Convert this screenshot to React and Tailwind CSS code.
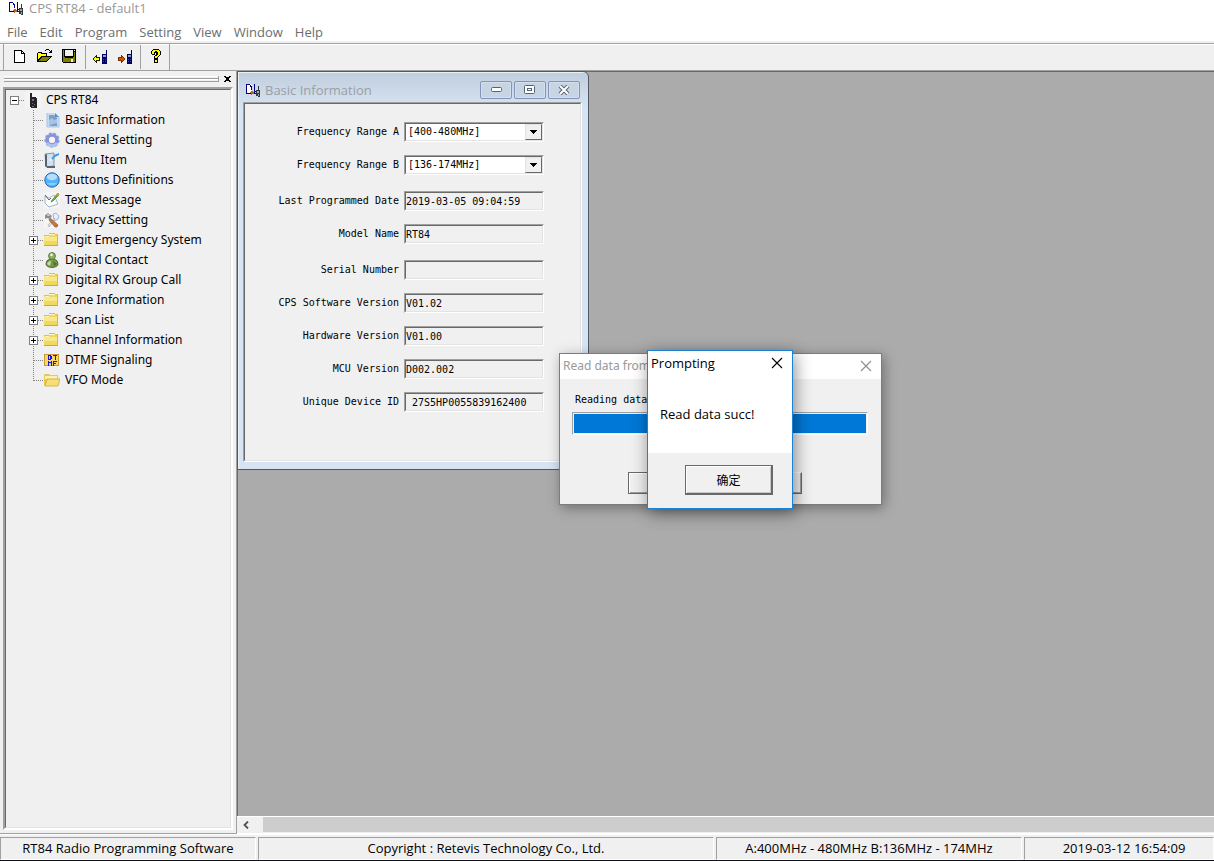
import React from 'react';

const MENUS = ['File', 'Edit', 'Program', 'Setting', 'View', 'Window', 'Help'];

const TREE = [
  { label: 'Basic Information', icon: 'page' },
  { label: 'General Setting', icon: 'gear' },
  { label: 'Menu Item', icon: 'note' },
  { label: 'Buttons Definitions', icon: 'ball' },
  { label: 'Text Message', icon: 'pencil' },
  { label: 'Privacy Setting', icon: 'tools' },
  { label: 'Digit Emergency System', icon: 'folder', expandable: true },
  { label: 'Digital Contact', icon: 'person' },
  { label: 'Digital RX Group Call', icon: 'folder', expandable: true },
  { label: 'Zone Information', icon: 'folder', expandable: true },
  { label: 'Scan List', icon: 'folder', expandable: true },
  { label: 'Channel Information', icon: 'folder', expandable: true },
  { label: 'DTMF Signaling', icon: 'dtmf' },
  { label: 'VFO Mode', icon: 'folderOpen' },
];

// Form rows, grouped by spacing
const FIELDS = [
  [
    { id: 'rangeA', label: 'Frequency Range A', value: '[400-480MHz]', select: true },
    { id: 'rangeB', label: 'Frequency Range B', value: '[136-174MHz]', select: true },
  ],
  [
    { id: 'lastDate', label: 'Last Programmed Date', value: '2019-03-05 09:04:59' },
    { id: 'model', label: 'Model Name', value: 'RT84' },
  ],
  [
    { id: 'serial', label: 'Serial Number', value: '' },
    { id: 'cps', label: 'CPS Software Version', value: 'V01.02' },
    { id: 'hardware', label: 'Hardware Version', value: 'V01.00' },
    { id: 'mcu', label: 'MCU Version', value: 'D002.002' },
    { id: 'device', label: 'Unique Device ID', value: ' 27S5HP0055839162400' },
  ],
];

const sunken = 'border border-t-[#a0a0a0] border-l-[#a0a0a0] border-r-white border-b-white';
const sunkenInner = 'border border-t-[#696969] border-l-[#696969] border-r-[#e3e3e3] border-b-[#e3e3e3]';

function AppLogo() {
  return (
    <svg width="16" height="16" viewBox="0 0 16 16" shapeRendering="crispEdges" aria-hidden="true">
      <path d="M1 2h4l2 2v7H1z" fill="#fff" />
      <path d="M1 2h1v9H1zM1 11h7v1H1zM2 2h3v1H2zM5 3h1v2H5zM6 4h1v4H6z" fill="#000080" />
      <path d="M6 9h2v1h1v2H7v1H6v-2H5v-1h1z" fill="#c0601c" />
      <path d="M9 2h1v9H9zM10 9h2v1h-2zM9 11h2v1H9z" fill="#000080" />
      <path d="M13 4h1v4h-1z" fill="#303840" />
      <path d="M11 8h4v7h-2v-1h-2z" fill="#303840" />
      <path d="M12 9h2v2h-2zM13 12h1v2h-1z" fill="#a0a0a8" />
    </svg>
  );
}

function NewIcon() {
  return (
    <svg width="16" height="16" viewBox="0 0 16 16" shapeRendering="crispEdges">
      <path d="M3 1h8v1h1v1h1v1h1v10H3z" fill="#000" />
      <path d="M4 2h6v3h3v8H4zM11 3h1v1h-1z" fill="#fff" />
    </svg>
  );
}

function OpenIcon() {
  return (
    <svg width="16" height="16" viewBox="0 0 16 16" shapeRendering="crispEdges">
      <path d="M1 4h1V3h4v1h5v3h5v1h-1v1h-1v1h-1v1h-1v1h-1v1H1z" fill="#000" />
      <path d="M2 4h3v1h5v2H5v1H4v1H3v1H2z" fill="#ff0" />
      <path d="M3 5h1v1H3zM5 5h1v1H5zM7 5h1v1H7zM9 5h1v1H9zM2 6h1v1H2zM4 6h1v1H4zM6 6h1v1H6zM8 6h1v1H8zM3 7h1v1H3z" fill="#fff" />
      <path d="M6 8h8v1h-1v1h-1v1h-1v1H3v-1h1v-1h1V9h1z" fill="#808000" />
      <path d="M10 0h3v1h-3zM9 1h1v1H9zM13 1h1v1h-1zM15 1h1v3h-3V3h1V2h1z" fill="#000" />
    </svg>
  );
}

function SaveIcon() {
  return (
    <svg width="16" height="16" viewBox="0 0 16 16" shapeRendering="crispEdges">
      <path d="M1 0h14v14H2v-1H1z" fill="#000" />
      <path d="M2 1h1v7h1v1h8V8h1V3h1v10H2z" fill="#808000" />
      <path d="M4 1h8v6H4zM13 1h1v1h-1zM10 10h2v3h-2z" fill="#f0f0f0" />
    </svg>
  );
}

function RadioArrowIcon({ direction }) {
  return (
    <svg width="16" height="16" viewBox="0 0 16 16" shapeRendering="crispEdges">
      {direction === 'read' ? (
        <g>
          <path d="M0 9h1V8h1V7h1V6h1v2h3v4H4v2H3v-1H2v-1H1v-1H0z" fill="#202000" />
          <path d="M1 9h1V8h1v1h3v2H3v1H2v-1H1z" fill="#ff0" />
        </g>
      ) : (
        <g>
          <path d="M0 8h3V6h1v1h1v1h1v1h1v2H6v1H5v1H4v1H3v-2H0z" fill="#803000" />
          <path d="M1 9h3V8h1v1h1v2H5v1H4v-1H1z" fill="#c85a00" />
        </g>
      )}
      <path d="M13 1h1v4h-1zM9 5h5v10H9z" fill="#000060" />
      <path d="M10 6h3v2h-3z" fill="#80a0e0" />
      <path d="M10 10h1v1h-1zM12 10h1v1h-1zM10 12h1v1h-1zM12 12h1v1h-1z" fill="#2040d0" />
    </svg>
  );
}

function HelpIcon() {
  return (
    <svg width="16" height="16" viewBox="0 0 16 16" shapeRendering="crispEdges">
      <path d="M5 0h6v1h1v1h1v4h-1v1h-1v1h-1v2H6V7h1V6h1V4H7v2H4V5H3V2h1V1h1zM6 10h4v4H6z" fill="#000" />
      <path d="M5 1h6v1h1v4h-1v1h-1v1H9v1H7V7h2V6h1V3H9V2H7v1H6v2H4V2h1zM7 11h2v2H7z" fill="#ff0" />
    </svg>
  );
}

function TreeIcon({ name }) {
  const common = { width: 16, height: 16, viewBox: '0 0 16 16', className: 'shrink-0' };
  switch (name) {
    case 'radio':
      return (
        <svg {...common} shapeRendering="crispEdges">
          <path d="M0 0h16v16H0z" fill="#f4f4f4" />
          <path d="M5 1h2v4h4v1h1v10H6v-1H5z" fill="#26222a" />
          <path d="M7 7h2v2H7zM7 11h1v1H7zM9 12h1v1H9zM7 14h2v1H7z" fill="#7a707c" />
        </svg>
      );
    case 'page':
      return (
        <svg {...common}>
          <path d="M3 1h8l4 4v10H3z" fill="#c3dbf3" />
          <path d="M5 3h5l3 3v8H5z" fill="#7d9dcb" />
          <path d="M5 8l3-2 2 2 3-1v4l-4 1-4 2z" fill="#a9c3e3" />
          <path d="M11 1l4 4h-4z" fill="#4f8fdc" />
          <path d="M3 1v14h12V5" fill="none" stroke="#a5c5e8" />
        </svg>
      );
    case 'gear':
      return (
        <svg {...common}>
          <circle cx="8" cy="8" r="6.6" fill="none" stroke="#8f9ee0" strokeWidth="2" strokeDasharray="3 1.6" />
          <circle cx="8" cy="8" r="4.8" fill="none" stroke="#8794dd" strokeWidth="3.4" />
          <path d="M3 11a6 6 0 0 0 10 0" fill="none" stroke="#a9c4ee" strokeWidth="3" />
          <circle cx="8" cy="7.6" r="2.8" fill="#f4f4fb" />
        </svg>
      );
    case 'note':
      return (
        <svg {...common}>
          <path d="M1 2l9-1v13l-8 1z" fill="#cfe0f2" stroke="#8295a8" />
          <path d="M1 3l2-1v13l-2-1z" fill="#55626f" />
          <path d="M3 14h8v2H3z" fill="#59636d" />
          <path d="M7 7l3-4 5-2v2l-4 2-3 3z" fill="#3a9ae8" />
          <path d="M5 9l2-3 1 2z" fill="#fff" />
        </svg>
      );
    case 'ball':
      return (
        <svg {...common}>
          <circle cx="8" cy="8" r="7.2" fill="#55b3f7" stroke="#2668bd" />
          <ellipse cx="8" cy="5" rx="5.2" ry="3.2" fill="#b4defc" />
          <path d="M3 11a6 5 0 0 0 10 0z" fill="#7cd3fc" />
        </svg>
      );
    case 'pencil':
      return (
        <svg {...common}>
          <path d="M0 0h16v16H0z" fill="#f5f5f5" />
          <path d="M1 4l4 2 5-3 4 9-9 3-4-4z" fill="#fdfefe" stroke="#a4b4c2" />
          <path d="M1 3l4 5 2-2" fill="none" stroke="#52616f" />
          <path d="M14 1l1 2-6 6-2 1 1-2z" fill="#6db33f" stroke="#4e6c2c" strokeWidth="0.6" />
          <path d="M12 2l2 2 1-2-1-1z" fill="#e3a13c" />
        </svg>
      );
    case 'tools':
      return (
        <svg {...common}>
          <path d="M0 0h16v16H0z" fill="#f5f5f5" />
          <path d="M9 2l3-1 3 3-1 3-4 2z" fill="#e9ecfa" stroke="#a4aee0" />
          <path d="M4 13l6-7 1 1-6 8z" fill="#dfe3ec" stroke="#9ca5b6" strokeWidth="0.6" />
          <path d="M6 6l8 7-1 2-2 0-6-7z" fill="#c87838" stroke="#8a4720" strokeWidth="0.6" />
          <path d="M1 3l3-2 4 3-2 3-3-1-2 1z" fill="#888e98" />
          <path d="M2 3l2-1 2 1-1 1z" fill="#d8dbe0" />
        </svg>
      );
    case 'person':
      return (
        <svg {...common}>
          <path d="M2 12q0-4 4-5h4q4 1 4 5 0 3-6 3.500Q2 15 2 12z" fill="#76994a" stroke="#4c6b2c" />
          <path d="M3 12q1-3 4-3l-1 5z" fill="#c5df98" />
          <path d="M9 9l1 5 3-2z" fill="#4f6d33" />
          <circle cx="8" cy="4" r="3.400" fill="#8db45f" stroke="#5a7a3a" />
          <circle cx="7.500" cy="2.800" r="1.400" fill="#eff6df" />
        </svg>
      );
    case 'dtmf':
      return (
        <svg {...common} shapeRendering="crispEdges">
          <path d="M0 2h15v12H0z" fill="#c99b36" />
          <path d="M1 3h13v10H1z" fill="#f8d765" />
          <path
            d="M4 3h3v1h1v3H7v1H4zM5 4v3h1V4zM9 3h4v1h-1v4h-1V4H9zM4 9h1v1h2V9h1v5H7v-3H5v3H4zM9 9h4v1h-3v1h2v1h-2v2H9z"
            fill="#1414e8"
            fillRule="evenodd"
          />
        </svg>
      );
    case 'folderOpen':
      return (
        <svg {...common}>
          <path d="M0 3l1-1h4l1 1h8v11H1L0 13z" fill="#e9c84c" />
          <path d="M1 4h12v3H1z" fill="#fdf2b4" />
          <path d="M3 7h13l-2 7H1z" fill="#f6df76" stroke="#d1a92f" strokeWidth="0.8" />
        </svg>
      );
    default:
      return (
        <svg {...common} shapeRendering="crispEdges">
          <path d="M0 3h5V1h6v1h3v12H0z" fill="#f2d95c" />
          <path d="M0 5h13v4H0z" fill="#f8e88c" />
          <path d="M0 3h5v1H0zM5 1h6v1H5zM11 2h3v1h-3z" fill="#dcc048" />
          <path d="M0 13h14v1H0z" fill="#d0aa28" />
          <path d="M13 3h1v10h-1z" fill="#dab93c" />
          <path d="M5 2h6v1H5zM1 4h4v1H1z" fill="#fdf5be" />
        </svg>
      );
  }
}

function Branch({ expandable, last }) {
  return (
    <svg width="15" height="20" viewBox="0 0 15 20" shapeRendering="crispEdges" className="shrink-0" aria-hidden="true">
      <path d={last ? 'M4.500 0v11' : 'M4.500 0v20'} stroke="#808080" strokeDasharray="1 1" />
      <path d="M5 10.500h10" stroke="#808080" strokeDasharray="1 1" />
      {expandable && (
        <g>
          <rect x="0.500" y="6.500" width="8" height="8" fill="#fff" stroke="#808080" />
          <path d="M2 10h5v1H2zM4 8h1v5H4z" fill="#000" />
        </g>
      )}
    </svg>
  );
}

function CloseCross({ size }) {
  return (
    <svg width={size} height={size} viewBox="0 0 12 12" aria-hidden="true">
      <path d="M1 1l10 10M11 1L1 11" stroke="currentColor" strokeWidth="1.1" fill="none" />
    </svg>
  );
}

function ToolButton({ label, children }) {
  return (
    <button type="button" aria-label={label} className="flex h-6 w-[25px] items-center justify-center">
      {children}
    </button>
  );
}

function Sidebar() {
  return (
    <aside className="flex w-[237px] shrink-0 flex-col border-r border-b border-[#a0a0a0] pr-[3px] pb-[3px] pl-[3px]">
      {/* Grip */}
      <div className="flex h-4 items-center gap-1 pr-[2px] pl-px">
        <div className="flex-1 border-r border-[#a0a0a0]">
          <div className="h-[3px] border-t border-b border-t-white border-b-[#a0a0a0]" />
          <div className="h-[3px] border-t border-b border-t-white border-b-[#a0a0a0]" />
        </div>
        <button type="button" aria-label="Close panel" className="flex h-3 w-2 items-center justify-center">
          <svg width="7" height="6" viewBox="0 0 7 6" shapeRendering="crispEdges">
            <path d="M0 0h2v1h3V0h2v1H6v1H5v2h1v1h1v1H5V5H2v1H0V5h1V4h1V2H1V1H0z" fill="#000" />
          </svg>
        </button>
      </div>

      {/* Tree */}
      <div className="flex-1 border-2 border-t-[#a0a0a0] border-r-white border-b-white border-l-[#a0a0a0]">
        <ul className={`h-full font-['Noto_Sans',sans-serif] text-[12px] leading-5 text-black ${sunkenInner}`}>
          <li>
            <div className="flex h-5 items-center pl-1">
              <svg width="15" height="20" viewBox="0 0 15 20" shapeRendering="crispEdges" aria-hidden="true">
                <path d="M9 10.500h6" stroke="#808080" strokeDasharray="1 1" />
                <rect x="0.500" y="6.500" width="8" height="8" fill="#fff" stroke="#808080" />
                <path d="M2 10h5v1H2z" fill="#000" />
              </svg>
              <TreeIcon name="radio" />
              <span className="pl-[5px]">CPS RT84</span>
            </div>
            <ul>
              {TREE.map((item, i) => (
                <li key={item.label} className="flex h-5 items-center pl-[23px]">
                  <Branch expandable={item.expandable} last={i === TREE.length - 1} />
                  <TreeIcon name={item.icon} />
                  <span className="pl-[5px] whitespace-nowrap">{item.label}</span>
                </li>
              ))}
            </ul>
          </li>
        </ul>
      </div>
    </aside>
  );
}

function Field({ field }) {
  return (
    <div className="flex h-5 items-center gap-[5px]">
      <label htmlFor={field.id} className="w-[154px] text-right whitespace-nowrap">
        {field.label}
      </label>
      <div className={`relative h-5 w-[140px] ${sunken}`}>
        {field.select ? (
          <>
            <select
              id={field.id}
              defaultValue={field.value}
              className={`block h-full w-full appearance-none bg-white pl-[2px] leading-4 ${sunkenInner}`}
            >
              <option>{field.value}</option>
            </select>
            <span className="pointer-events-none absolute top-px right-px bottom-px flex w-[17px] items-center justify-center border border-t-[#e3e3e3] border-r-[#696969] border-b-[#696969] border-l-[#e3e3e3] bg-[#f0f0f0]">
              <svg width="7" height="4" viewBox="0 0 7 4" shapeRendering="crispEdges">
                <path d="M0 0h7v1H6v1H5v1H4v1H3V3H2V2H1V1H0z" fill="#000" />
              </svg>
            </span>
          </>
        ) : (
          <input
            id={field.id}
            type="text"
            readOnly
            defaultValue={field.value}
            className={`block h-full w-full bg-[#f0f0f0] leading-4 outline-none ${sunkenInner}`}
          />
        )}
      </div>
    </div>
  );
}

function FrameButton({ label, children }) {
  return (
    <button
      type="button"
      aria-label={label}
      className="flex h-[18px] w-8 items-center justify-center rounded-xs border border-[#8494b8] bg-[#c6d4e4] shadow-[inset_0_0_0_1px_#d4e0ee]"
    >
      {children}
    </button>
  );
}

function BasicInformationWindow() {
  return (
    <section className="absolute top-0 left-0 flex w-[352px] flex-col rounded-tr-md border border-[#505860] bg-linear-to-b from-[#bfcddd] to-[#d7e4f2] to-[36px] pr-[6px] pb-[7px] pl-[5px] shadow-[inset_1px_1px_0_#e8f0f8]">
      <header className="flex h-[30px] items-center gap-1 pt-[5px] pr-[2px] pl-[2px]">
        <AppLogo />
        <h2 className="flex-1 font-['Open_Sans',sans-serif] text-[13px] leading-4 text-[#9a9fa6]">Basic Information</h2>
        <div className="flex gap-[2px]">
          <FrameButton label="Minimize">
            <svg width="13" height="6" viewBox="0 0 13 6">
              <rect x="1.500" y="0.500" width="10" height="4" rx="1" fill="#fff" stroke="#596273" />
            </svg>
          </FrameButton>
          <FrameButton label="Maximize">
            <svg width="12" height="10" viewBox="0 0 12 10">
              <rect x="0.500" y="0.500" width="10" height="8" rx="1" fill="#fff" stroke="#596273" />
              <rect x="3.500" y="3.500" width="4" height="2" fill="#fff" stroke="#596273" />
            </svg>
          </FrameButton>
          <FrameButton label="Close">
            <svg width="12" height="10" viewBox="0 0 12 10">
              <path d="M2 1l8 8M10 1L2 9" stroke="#596273" strokeWidth="4" />
              <path d="M2 1l8 8M10 1L2 9" stroke="#fff" strokeWidth="2" />
            </svg>
          </FrameButton>
        </div>
      </header>
      <div className={sunken}>
        <form className={`flex flex-col gap-4 bg-[#f0f0f0] pt-[18px] pb-12 font-['DejaVu_Sans_Mono',monospace] text-[10px] leading-4 text-black ${sunkenInner}`}>
          {FIELDS.map((group) => (
            <div key={group[0].id} className="flex flex-col gap-[13px]">
              {group.map((field) => (
                <Field key={field.id} field={field} />
              ))}
            </div>
          ))}
        </form>
      </div>
    </section>
  );
}

function ReadDialog() {
  return (
    <section className="absolute top-[282px] left-[322px] w-[323px] border border-[#7c7c7c] bg-[#f0f0f0] shadow-[2px_3px_12px_rgba(0,0,0,0.35)]">
      <header className="flex h-[25px] items-center justify-between bg-white pr-[9px] pb-px pl-[3px]">
        <h2 className="font-['Noto_Sans',sans-serif] text-[12px] leading-4 whitespace-nowrap text-[#999999]">
          Read data from
        </h2>
        <button type="button" aria-label="Close" className="text-[#8c8c8c]">
          <CloseCross size={12} />
        </button>
      </header>
      <div className="px-3 pt-[13px] pb-[10px]">
        <p className="pl-[3px] font-['DejaVu_Sans_Mono',monospace] text-[10px] leading-4 text-black">Reading data</p>
        <div
          role="progressbar"
          aria-label="Reading data"
          aria-valuenow={100}
          className={`mt-1 mr-px h-[23px] p-px ${sunken}`}
        >
          <div className="h-full w-full bg-[#0078d7]" />
        </div>
        <div className="mt-[37px] flex justify-between pr-[67px] pl-14">
          <button
            type="button"
            aria-label="OK"
            className="h-[22px] w-20 border border-[#696969] shadow-[inset_1px_1px_0_#fff,inset_-1px_-1px_0_#a0a0a0]"
          />
          <button
            type="button"
            aria-label="Cancel"
            className="h-[22px] w-20 border border-t-white border-r-[#696969] border-b-[#696969] border-l-white shadow-[inset_-1px_-1px_0_#a0a0a0]"
          />
        </div>
      </div>
    </section>
  );
}

function PromptDialog() {
  return (
    <section
      role="dialog"
      aria-labelledby="prompt-title"
      className="absolute top-[279px] left-[410px] w-[146px] border border-[#1883d7] bg-white font-['Open_Sans',sans-serif] text-[13px] leading-4 text-black shadow-[2px_4px_16px_rgba(0,0,0,0.45)]"
    >
      <header className="flex h-6 items-center justify-between pr-[9px] pl-[3px]">
        <h2 id="prompt-title">Prompting</h2>
        <button type="button" aria-label="Close">
          <CloseCross size={12} />
        </button>
      </header>
      <p className="pt-[31px] pb-[31px] pl-3">Read data succ!</p>
      <footer className="flex justify-end bg-[#f0f0f0] pt-3 pr-[19px] pb-[13px]">
        <button
          type="button"
          className="h-[30px] w-[88px] border border-r-2 border-b-2 border-[#696969] font-['Noto_Sans_CJK_SC',sans-serif] text-[12px] leading-4 shadow-[inset_1px_1px_0_#fff,inset_-1px_-1px_0_#c8c8c8]"
        >
          确定
        </button>
      </footer>
    </section>
  );
}

export default function App() {
  return (
    <div className="flex h-screen flex-col overflow-hidden border-b border-[#101018] bg-[#f0f0f0] font-['Open_Sans',sans-serif] text-[13px] leading-4">
      {/* Title bar */}
      <header className="flex h-[18px] items-center gap-[5px] bg-white pb-[2px] pl-2 text-[#999999]">
        <AppLogo />
        <h1>CPS RT84 - default1</h1>
      </header>

      {/* Menu bar */}
      <nav className="flex h-[23px] items-end gap-3 bg-white pb-px pl-[7px] text-[#6d6d6d]">
        {MENUS.map((menu) => (
          <button key={menu} type="button">
            {menu}
          </button>
        ))}
      </nav>

      {/* Toolbar */}
      <div className="flex h-[30px] flex-col border-b border-[#a0a0a0] pt-[2px]">
        <div className="flex flex-1 border-t border-[#a0a0a0] pl-[3px] shadow-[inset_0_1px_0_#fff]">
          <div className="flex items-center border-r border-l border-[#a0a0a0]">
            <div className="flex pr-1 pl-[2px]">
              <ToolButton label="New"><NewIcon /></ToolButton>
              <ToolButton label="Open"><OpenIcon /></ToolButton>
              <ToolButton label="Save"><SaveIcon /></ToolButton>
            </div>
            <div className="flex border-r border-l border-[#a0a0a0] pr-[2px] pl-[2px]">
              <ToolButton label="Read from radio"><RadioArrowIcon direction="read" /></ToolButton>
              <ToolButton label="Write to radio"><RadioArrowIcon direction="write" /></ToolButton>
            </div>
            <div className="flex pr-px pl-[2px]">
              <ToolButton label="Help"><HelpIcon /></ToolButton>
            </div>
          </div>
        </div>
      </div>

      <div className="flex min-h-0 flex-1">
        <Sidebar />

        <main className="flex min-w-0 flex-1 flex-col">
          {/* MDI workspace */}
          <div className="relative min-h-0 flex-1 overflow-hidden bg-[#ababab] shadow-[inset_1px_1px_0_#696969]">
            <BasicInformationWindow />
            <ReadDialog />
            <PromptDialog />
          </div>

          {/* Horizontal scrollbar */}
          <div className="flex h-[18px] border-t border-b border-white pb-px">
            <button type="button" aria-label="Scroll left" className="flex w-[26px] items-center pl-[6px]">
              <svg width="6" height="8" viewBox="0 0 6 8">
                <path d="M5 0.500L1.500 4 5 7.500" fill="none" stroke="#505050" strokeWidth="1.800" />
              </svg>
            </button>
            <div className="flex-1 bg-[#cdcdcd]" />
          </div>
        </main>
      </div>

      {/* Status bar */}
      <footer className="flex h-[26px] gap-[2px] border-t border-white pt-[2px] text-center leading-5 whitespace-nowrap text-black">
        <div className={`w-64 ${sunken}`}>RT84 Radio Programming Software</div>
        <div className={`flex-1 ${sunken}`}>Copyright : Retevis Technology Co., Ltd.</div>
        <div className={`w-[306px] ${sunken}`}>A:400MHz - 480MHz B:136MHz - 174MHz</div>
        <div className={`w-[190px] pl-[10px] ${sunken}`}>2019-03-12 16:54:09</div>
      </footer>
    </div>
  );
}
